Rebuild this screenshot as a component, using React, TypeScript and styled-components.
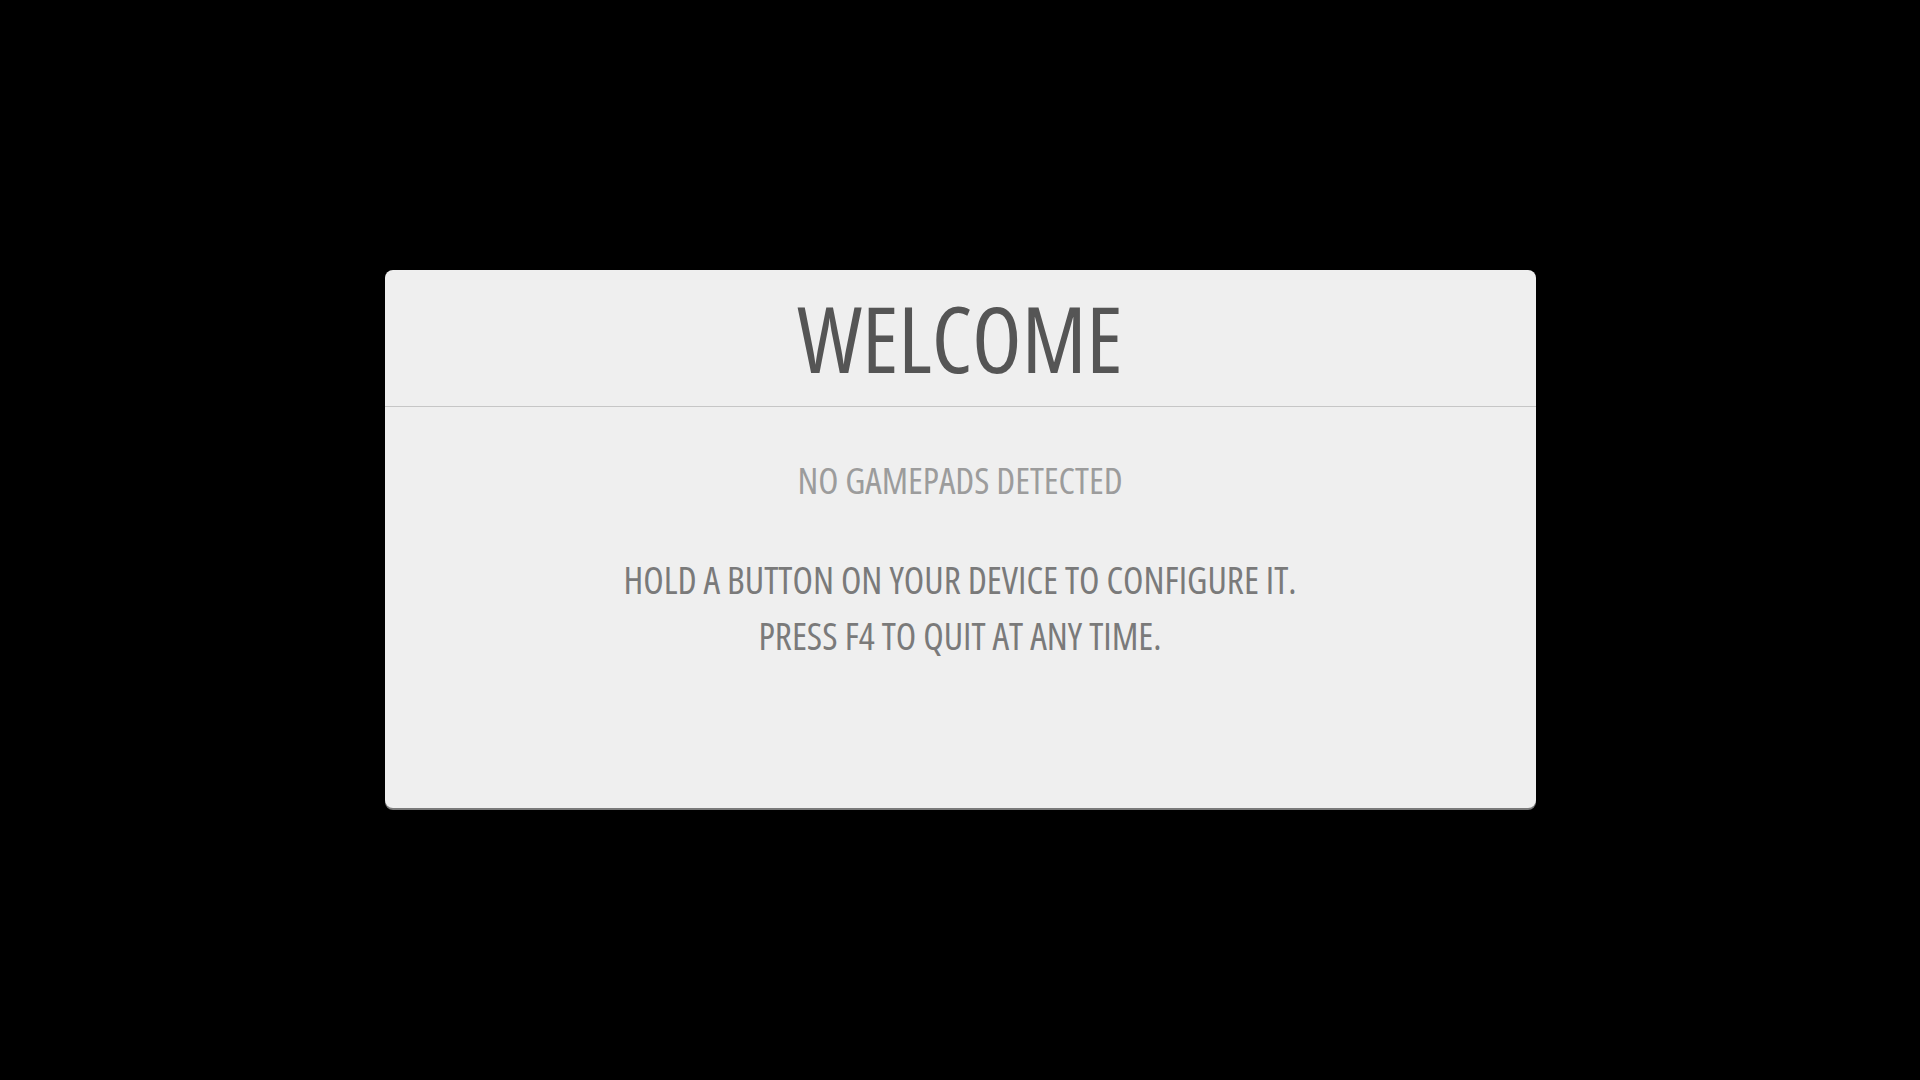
import React from "react";
import styled, { createGlobalStyle } from "styled-components";

const GlobalStyle = createGlobalStyle`
  html, body {
    margin: 0;
    padding: 0;
    background: #000;
    height: 100%;
  }
  #root {
    height: 100%;
  }
`;

const Screen = styled.div`
  width: 100vw;
  height: 100vh;
  background: #000;
  display: flex;
  align-items: center;
  justify-content: center;
  font-family: "Open Sans", "Liberation Sans", sans-serif;
  font-stretch: 75%;
  text-transform: uppercase;
`;

const Dialog = styled.div`
  width: 1151px;
  height: 538px;
  margin-top: -2px;
  background: #efefef;
  border-radius: 8px;
  box-shadow: 0 2px 0 #7a7a7a;
  display: flex;
  flex-direction: column;
  overflow: hidden;
`;

const Header = styled.div`
  height: 136px;
  border-bottom: 1px solid #c6c6c6;
  display: flex;
  align-items: center;
  justify-content: center;
`;

const Title = styled.h1`
  margin: 0;
  font-size: 91px;
  font-weight: 400;
  color: #555555;
  line-height: 1;
`;

const Body = styled.div`
  display: flex;
  flex-direction: column;
  align-items: center;
  padding-top: 45px;
`;

const Line = styled.p<{ $tone: string; $size: number; $gap?: number }>`
  margin: ${(p) => p.$gap ?? 0}px 0 0;
  font-size: ${(p) => p.$size}px;
  line-height: 56px;
  font-weight: 400;
  color: ${(p) => p.$tone};
`;

export default function App() {
  return (
    <>
      <GlobalStyle />
      <Screen>
        <Dialog>
          <Header>
            <Title>Welcome</Title>
          </Header>
          <Body>
            <Line $tone="#9c9c9c" $size={37}>No gamepads detected</Line>
            <Line $tone="#7a7a7a" $size={37.5} $gap={44}>
              Hold a button on your device to configure it.
            </Line>
            <Line $tone="#7a7a7a" $size={37.5}>Press F4 to quit at any time.</Line>
          </Body>
        </Dialog>
      </Screen>
    </>
  );
}
